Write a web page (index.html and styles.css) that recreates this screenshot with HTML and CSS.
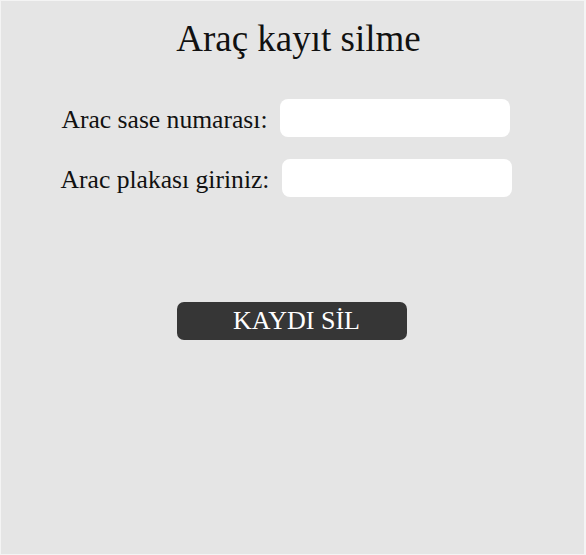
FILE: index.html
```html
<!DOCTYPE html>
<html lang="tr">
<head>
<meta charset="utf-8">
<title>Araç kayıt silme</title>
<link rel="stylesheet" href="styles.css">
</head>
<body>
<main class="panel">
  <h1 class="title">Araç kayıt silme</h1>
  <form class="form">
    <div class="row row-first">
      <label class="label" for="sase">Arac sase numarası:</label>
      <input class="field" id="sase" type="text">
    </div>
    <div class="row row-second">
      <label class="label" for="plaka">Arac plakası giriniz:</label>
      <input class="field" id="plaka" type="text">
    </div>
    <button class="btn" type="button">KAYDI SİL</button>
  </form>
</main>
</body>
</html>
```

FILE: styles.css
```css
html, body {
  margin: 0;
  padding: 0;
}
body {
  background: #f4f4f4;
  padding: 1px 2px 1px 1px;
  font-family: "Liberation Serif", "Times New Roman", serif;
  color: #111;
}
.panel {
  background: #e5e5e5;
  width: 583px;
  height: 553px;
  box-sizing: border-box;
  display: flex;
  flex-direction: column;
  align-items: center;
}
.title {
  margin: 17px 0 0 12px;
  font-size: 37px;
  font-weight: normal;
  line-height: 42px;
}
.form {
  display: flex;
  flex-direction: column;
  align-items: center;
  margin-top: 39px;
}
.row {
  display: flex;
  align-items: center;
}
.row-first {
  gap: 12px;
  margin-left: -14px;
}
.row-second {
  gap: 13px;
  margin-top: 22px;
  margin-left: -12px;
}
.label {
  font-size: 25.6px;
  line-height: 30px;
  padding-top: 4px;
}
.field {
  width: 230px;
  height: 38px;
  box-sizing: border-box;
  border: none;
  border-radius: 8px;
  background: #ffffff;
  margin: 0;
  padding: 0 10px;
  font-family: inherit;
  font-size: 20px;
}
.btn {
  margin-top: 105px;
  margin-left: -2px;
  width: 230px;
  height: 38px;
  border: none;
  border-radius: 7px;
  background: #363636;
  color: #ffffff;
  font-family: "Liberation Serif", "Times New Roman", serif;
  font-size: 26px;
  padding: 0 0 0 10px;
}
```
